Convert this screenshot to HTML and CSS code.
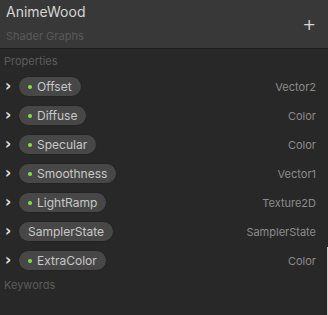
FILE: index.html
```html
<!DOCTYPE html>
<html lang="en">
<head>
    <meta charset="UTF-8">
    <title>Blackboard - AnimeWood</title>
    <link rel="stylesheet" href="styles.css">
</head>
<body>
    <div class="blackboard">
        <div class="header">
            <div class="titles">
                <div class="title">AnimeWood</div>
                <div class="subtitle">Shader Graphs</div>
            </div>
            <button class="add-button">+</button>
        </div>

        <div class="section-label">Properties</div>

        <div class="property-list">
            <div class="property-row">
                <span class="chevron">&#8250;</span>
                <span class="pill"><span class="dot"></span>Offset</span>
                <span class="type">Vector2</span>
            </div>
            <div class="property-row">
                <span class="chevron">&#8250;</span>
                <span class="pill"><span class="dot"></span>Diffuse</span>
                <span class="type">Color</span>
            </div>
            <div class="property-row">
                <span class="chevron">&#8250;</span>
                <span class="pill"><span class="dot"></span>Specular</span>
                <span class="type">Color</span>
            </div>
            <div class="property-row">
                <span class="chevron">&#8250;</span>
                <span class="pill"><span class="dot"></span>Smoothness</span>
                <span class="type">Vector1</span>
            </div>
            <div class="property-row">
                <span class="chevron">&#8250;</span>
                <span class="pill"><span class="dot"></span>LightRamp</span>
                <span class="type">Texture2D</span>
            </div>
            <div class="property-row">
                <span class="chevron">&#8250;</span>
                <span class="pill">SamplerState</span>
                <span class="type">SamplerState</span>
            </div>
            <div class="property-row">
                <span class="chevron">&#8250;</span>
                <span class="pill"><span class="dot"></span>ExtraColor</span>
                <span class="type">Color</span>
            </div>
        </div>

        <div class="section-label keywords">Keywords</div>
    </div>
</body>
</html>
```

FILE: styles.css
```css
body {
    margin: 0;
    background: #282828;
    font-family: Inter, "Noto Sans", sans-serif;
    overflow: hidden;
}

.blackboard {
    width: 328px;
    height: 315px;
    background: #282828;
    position: relative;
}

/* полоска справа внизу */
.blackboard::after {
    content: '';
    position: absolute;
    right: 0;
    top: 247px;
    bottom: 0;
    width: 1px;
    background: #c8c8c8;
}

.header {
    height: 48px;
    background: #383838;
    border-bottom: 1px solid #1e1e1e;
    display: flex;
    justify-content: space-between;
    align-items: flex-start;
    padding: 0 12px 0 6px;
}

.titles {
    padding-top: 3px;
}

.title {
    color: #d4d4d4;
    font-size: 14px;
    line-height: 18px;
}

.subtitle {
    color: #585858;
    font-size: 11px;
    line-height: 14px;
    margin-top: 8px;
}

.add-button {
    background: none;
    border: none;
    color: #d8d8d8;
    font-family: "DejaVu Sans", sans-serif;
    font-size: 16px;
    line-height: 16px;
    padding: 0;
    margin-top: 17px;
}

.section-label {
    color: #5c5c5c;
    font-size: 11px;
    line-height: 14px;
    padding: 5px 4px 0;
}

.property-list {
    display: flex;
    flex-direction: column;
    gap: 8px;
    margin-top: 8px;
}

.property-row {
    height: 21px;
    display: flex;
    align-items: center;
    padding: 0 12px 0 5px;
}

.chevron {
    width: 13px;
    color: #e0e0e0;
    font-family: "DejaVu Sans", sans-serif;
    font-size: 15px;
    font-weight: bold;
    line-height: 15px;
    margin-top: -1px;
}

.pill {
    height: 19px;
    display: flex;
    align-items: center;
    gap: 5px;
    padding: 0 9px;
    background: #474747;
    border: 1px solid #232323;
    border-radius: 11px;
    color: #c8c8c8;
    font-size: 12px;
}

.dot {
    width: 4px;
    height: 4px;
    border-radius: 50%;
    background: #84e04b;
}

.type {
    margin-left: auto;
    color: #8c8c8c;
    font-size: 11px;
}

.keywords {
    padding-top: 7px;
}
```
